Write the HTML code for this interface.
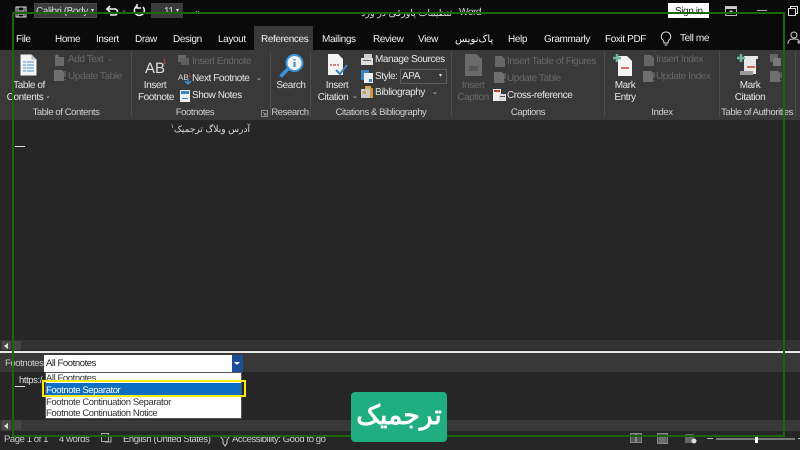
<!DOCTYPE html>
<html><head><meta charset="utf-8">
<style>
html,body{margin:0;padding:0;background:#262626}
#r{position:relative;width:800px;height:450px;overflow:hidden;background:#262626;font-family:"Liberation Sans","Noto Sans CJK SC",sans-serif;filter:blur(.35px);text-rendering:geometricPrecision}
#r div{position:absolute;white-space:nowrap}
.t{font-size:10px;color:#e6e6e6;line-height:12px;margin-top:2px;letter-spacing:-.42px}
.c{text-align:center;transform:translateX(-50%)}
.d{color:#696969}
.g{color:#cfcfcf}
.tab{top:32px;font-size:10px;color:#f0f0f0;line-height:12px;margin-top:2px;letter-spacing:-.38px}
[dir=rtl]{letter-spacing:0!important}
svg{position:absolute;overflow:visible}
.sep{width:1px;background:#4d4d4d;top:52px;height:64px}
</style></head><body>
<div id="r">
<div style="left:0;top:0;width:800px;height:50px;background:#0a0a0a"></div>
<div style="left:0;top:50px;width:800px;height:70px;background:#393939"></div>
<div style="left:254px;top:26px;width:59px;height:24px;background:#393939"></div>

<!-- title bar -->
<svg style="left:15px;top:6px" width="12" height="12"><path d="M1 1h10v10H1z M3 1v4h6V1 M3 11V8h6v3" fill="none" stroke="#ddd" stroke-width="1"/></svg>
<div style="left:34px;top:3px;width:63px;height:15px;background:#3b3b3b;border:1px solid #4a4a4a;box-sizing:border-box"></div>
<div class="t" style="left:36px;top:4px;color:#ddd">Calibri (Body</div>
<div class="t" style="left:91px;top:3px;font-size:6px;color:#ddd">▾</div>
<svg style="left:105px;top:5px" width="14" height="12"><path d="M2 4h7a3 3 0 0 1 1 6H5 M5 1L2 4l3 3" fill="none" stroke="#eee" stroke-width="1.6"/></svg>
<div class="t" style="left:121px;top:3px;font-size:7px;color:#888">⌄</div>
<svg style="left:133px;top:4px" width="13" height="13"><path d="M4 2a5 5 0 1 0 6 1 M4 0v4h4" fill="none" stroke="#eee" stroke-width="1.5"/></svg>
<div style="left:151px;top:3px;width:32px;height:15px;background:#3b3b3b"></div>
<div class="t" style="left:164px;top:4px;color:#ddd">11</div>
<div class="t" style="left:176px;top:3px;font-size:6px;color:#ddd">▾</div>
<div class="t" style="left:194px;top:3px;font-size:8px;color:#ccc">⌄</div>
<div class="t" style="left:352px;top:6px;width:100px;text-align:right;color:#ddd;font-size:9.5px" dir="rtl">تنظیمات پاورقی در ورد</div>
<div class="t" style="left:459px;top:5px;color:#ddd">Word</div>
<div style="left:668px;top:3px;width:41px;height:15px;background:#fff"></div>
<div class="t" style="left:675px;top:4px;color:#222">Sign in</div>
<svg style="left:725px;top:6px" width="12" height="10"><path d="M.5.5h11v9H.5z" fill="none" stroke="#bbb"/><path d="M1 1h10v2H1zM6 4l-2 2h4z" fill="#ccc"/></svg>
<div style="left:757px;top:10px;width:10px;height:1px;background:#aaa"></div>
<svg style="left:788px;top:6px" width="10" height="10"><path d="M.5 2.500h7v7h-7z M2.500 2.500v-2h7v7h-2" fill="none" stroke="#ddd"/></svg>

<!-- tabs -->
<div class="tab" style="left:16px">File</div>
<div class="tab" style="left:55px">Home</div>
<div class="tab" style="left:96px">Insert</div>
<div class="tab" style="left:135px">Draw</div>
<div class="tab" style="left:173px">Design</div>
<div class="tab" style="left:218px">Layout</div>
<div class="tab" style="left:261px">References</div>
<div class="tab" style="left:322px">Mailings</div>
<div class="tab" style="left:373px">Review</div>
<div class="tab" style="left:418px">View</div>
<div class="tab" style="left:455px" dir="rtl">پاک‌نویس</div>
<div class="tab" style="left:508px">Help</div>
<div class="tab" style="left:544px">Grammarly</div>
<div class="tab" style="left:605px">Foxit PDF</div>
<svg style="left:660px;top:31px" width="12" height="15"><path d="M6 1a4.500 4.500 0 0 0-3 8c.8.800 1 1.500 1 3h4c0-1.500.2-2.200 1-3a4.500 4.500 0 0 0-3-8z M4.500 14h3" fill="none" stroke="#ddd"/></svg>
<div class="tab" style="left:680px;top:31px">Tell me</div>
<svg style="left:787px;top:31px" width="13" height="14"><circle cx="7" cy="4" r="3" fill="none" stroke="#ccc"/><path d="M1 13c0-4 2-5 6-5s5 1 5 2M10 11h4M12 9v4" fill="none" stroke="#ccc"/></svg>

<!-- TOC group -->
<svg style="left:20px;top:54px" width="17" height="22"><path d="M.5.5h11l5 5v16H.5z" fill="#f4f4f4"/><path d="M11.500.5v5h5" fill="#bbb"/><path d="M3 8h3M7 8h7M3 11h3M7 11h7M3 14h3M7 14h7M3 17h3M7 17h7" stroke="#4a8fd0"/></svg>
<div class="t c" style="left:29px;top:78px">Table of</div>
<div class="t c" style="left:25px;top:90px">Contents</div>
<div class="t" style="left:45px;top:89px;font-size:7px;color:#ccc">⌄</div>
<svg style="left:54px;top:54px" width="11" height="12"><path d="M1 3h9v9H1z" fill="#6a6a6a"/><path d="M3 0v4M1 2h4" stroke="#7a7a7a"/></svg>
<div class="t d" style="left:68px;top:52px">Add Text</div>
<div class="t d" style="left:107px;top:52px;font-size:7px">⌄</div>
<svg style="left:54px;top:70px" width="12" height="12"><path d="M0 0h8l2 2v9H0z" fill="#6f6f6f"/><path d="M11 1v6M11 9v1" stroke="#777"/></svg>
<div class="t d" style="left:68px;top:69px">Update Table</div>
<div class="t c g" style="left:66px;top:105px;font-size:9.500px">Table of Contents</div>
<div class="sep" style="left:131px"></div>

<!-- Footnotes -->
<div class="t" style="left:145px;top:58px;font-size:15px;line-height:17px;color:#ddd;letter-spacing:0">AB</div>
<div class="t" style="left:162px;top:54px;font-size:8px;color:#c4452a">1</div>
<div class="t c" style="left:155px;top:78px">Insert</div>
<div class="t c" style="left:156px;top:90px">Footnote</div>
<svg style="left:178px;top:55px" width="12" height="11"><path d="M0 0h8v7H0z" fill="#666"/><path d="M3 3h8v7H3z" fill="#5e5e5e"/></svg>
<div class="t d" style="left:192px;top:54px">Insert Endnote</div>
<div class="t" style="left:178px;top:70px;font-size:8px;color:#ddd;letter-spacing:0">AB</div>
<div class="t" style="left:188px;top:68px;font-size:6px;color:#c4452a">1</div>
<svg style="left:184px;top:78px" width="8" height="7"><path d="M4 0v5M1 3l3 3 3-3" fill="none" stroke="#3a94dc" stroke-width="1.300"/></svg>
<div class="t" style="left:192px;top:71px">Next Footnote</div>
<div class="t" style="left:256px;top:71px;font-size:7px;color:#ccc">⌄</div>
<svg style="left:180px;top:90px" width="10" height="12"><path d="M0 0h10v12H0z" fill="#eee"/><path d="M1 1h8v3H1zM2 8h6v1H2z" fill="#3a84c8"/></svg>
<div class="t" style="left:192px;top:88px">Show Notes</div>
<div class="t c g" style="left:195px;top:105px;font-size:9.500px">Footnotes</div>
<svg style="left:261px;top:110px" width="7" height="7"><path d="M.5.5h6v6h-6zM2 2l3 3M3 5h2V3" fill="none" stroke="#aaa" stroke-width=".8"/></svg>
<div class="sep" style="left:270px"></div>

<!-- Research -->
<svg style="left:279px;top:54px" width="26" height="25"><circle cx="15.500" cy="9" r="8" fill="#f4f4f4" stroke="#3a94dc" stroke-width="2"/><path d="M9 15L1.500 22.500" stroke="#3a94dc" stroke-width="3.500"/><path d="M15.500 8v5M15.500 5v1.500" stroke="#3a84c8" stroke-width="2"/></svg>
<div class="t c" style="left:291px;top:78px">Search</div>
<div class="t c g" style="left:290px;top:105px;font-size:9.500px">Research</div>
<div class="sep" style="left:310px"></div>

<!-- Citations -->
<svg style="left:328px;top:54px" width="21" height="24"><path d="M0 0h10l5 5v16H0z" fill="#f4f4f4"/><path d="M4 11H2M11 11H9M5 11h3" stroke="#c4452a" stroke-width="1.300"/><path d="M8 16l4 4 7-9" fill="none" stroke="#3a84c8" stroke-width="2"/></svg>
<div class="t c" style="left:337px;top:78px">Insert</div>
<div class="t c" style="left:333px;top:90px">Citation</div>
<div class="t" style="left:352px;top:89px;font-size:7px;color:#ccc">⌄</div>
<svg style="left:361px;top:54px" width="13" height="12"><path d="M3 0h8v4H3z" fill="#ccc"/><path d="M0 4h12v7H0z" fill="#ddd"/><path d="M2 6h8v1H2z" fill="#666"/></svg>
<div class="t" style="left:375px;top:52px">Manage Sources</div>
<svg style="left:361px;top:70px" width="13" height="13"><path d="M0 0h8v10H0z" fill="#3a84c8"/><path d="M3 3h9v10H3z" fill="#eee"/><path d="M8 9h3v3H8z" fill="#3a84c8"/></svg>
<div class="t" style="left:375px;top:69px">Style:</div>
<div style="left:400px;top:69px;width:47px;height:15px;border:1px solid #5c5c5c;box-sizing:border-box;background:#393939"></div>
<div class="t" style="left:402px;top:69px">APA</div>
<div class="t" style="left:439px;top:68px;font-size:6px;color:#ddd">▾</div>
<svg style="left:361px;top:86px" width="13" height="13"><path d="M4 0h6v3H4z" fill="#d9a74a"/><path d="M0 3h9v9H0z" fill="#c9c9c9"/><path d="M9 2h3v10H9zM2 5h3v3H2z" fill="#d09a3c"/></svg>
<div class="t" style="left:375px;top:85px">Bibliography</div>
<div class="t" style="left:432px;top:85px;font-size:7px;color:#ccc">⌄</div>
<div class="t c g" style="left:381px;top:105px;font-size:9.500px">Citations &amp; Bibliography</div>
<div class="sep" style="left:451px"></div>

<!-- Captions -->
<svg style="left:465px;top:54px" width="17" height="22"><path d="M0 0h11l6 5v17H0z" fill="#6a6a6a"/><path d="M4 12h9v5H4z" fill="#555"/></svg>
<div class="t c d" style="left:473px;top:78px">Insert</div>
<div class="t c d" style="left:473px;top:90px">Caption</div>
<svg style="left:495px;top:56px" width="10" height="11"><path d="M0 0h7l3 3v8H0z" fill="#666"/></svg>
<div class="t d" style="left:507px;top:54px">Insert Table of Figures</div>
<svg style="left:494px;top:72px" width="12" height="12"><path d="M0 0h8l2 2v9H0z" fill="#6f6f6f"/><path d="M11 1v6M11 9v1" stroke="#777"/></svg>
<div class="t d" style="left:507px;top:71px">Update Table</div>
<svg style="left:493px;top:89px" width="13" height="12"><path d="M0 0h8v12H0z" fill="#eee"/><path d="M1 1h6v2H1z" fill="#c4452a"/><path d="M6 5h7v7H6z" fill="#ddd"/><path d="M7 7h5v1H7z" fill="#555"/></svg>
<div class="t" style="left:507px;top:88px">Cross-reference</div>
<div class="t c g" style="left:528px;top:105px;font-size:9.500px">Captions</div>
<div class="sep" style="left:604px"></div>

<!-- Index -->
<svg style="left:613px;top:54px" width="21" height="23"><path d="M5 2h9l5 5v15H5z" fill="#f4f4f4"/><path d="M8 14h8" stroke="#d0452a" stroke-width="1.500"/><path d="M4 0v8M0 4h8" stroke="#6fb59f" stroke-width="2.500"/></svg>
<div class="t c" style="left:625px;top:78px">Mark</div>
<div class="t c" style="left:625px;top:90px">Entry</div>
<svg style="left:644px;top:55px" width="10" height="11"><path d="M0 0h7l3 3v8H0z" fill="#666"/></svg>
<div class="t d" style="left:656px;top:52px">Insert Index</div>
<svg style="left:643px;top:71px" width="12" height="12"><path d="M0 0h8l2 2v9H0z" fill="#6f6f6f"/><path d="M11 1v6M11 9v1" stroke="#777"/></svg>
<div class="t d" style="left:656px;top:69px">Update Index</div>
<div class="t c g" style="left:662px;top:105px;font-size:9.500px">Index</div>
<div class="sep" style="left:719px"></div>

<!-- TOA -->
<svg style="left:737px;top:54px" width="24" height="23"><path d="M7 2h14v3h-2v15H3v-3h4z" fill="#e8e8e8"/><path d="M10 13h8" stroke="#d0452a" stroke-width="1.500"/><path d="M4 0v8M0 4h8" stroke="#6fb59f" stroke-width="2.500"/><path d="M3 17h13v4H3z" fill="#9a9a9a"/></svg>
<div class="t c" style="left:750px;top:78px">Mark</div>
<div class="t c" style="left:750px;top:90px">Citation</div>
<svg style="left:770px;top:54px" width="11" height="12"><path d="M0 0h8v8H0z" fill="#666"/><path d="M3 4h8v8H3z" fill="#777"/></svg>
<svg style="left:770px;top:71px" width="12" height="12"><path d="M0 0h8l2 2v9H0z" fill="#6f6f6f"/><path d="M11 1v6M11 9v1" stroke="#777"/></svg>
<div class="t c g" style="left:757px;top:105px;font-size:9.500px">Table of Authorities</div>
<div class="sep" style="left:795px"></div>

<!-- document -->
<div class="t" style="left:150px;top:121px;width:100px;text-align:right;font-size:9px;color:#ddd" dir="rtl">آدرس وبلاگ ترجمیک<sup style="font-size:6px;line-height:0">۱</sup></div>
<div style="left:15px;top:146px;width:10px;height:1px;background:#ddd"></div>

<!-- top scrollbar -->
<div style="left:0;top:340px;width:800px;height:10px;background:#333"></div>
<div style="left:2px;top:341px;width:9px;height:9px;background:#4a4a4a"></div>
<div style="left:4px;top:343px;width:0;height:0;border:3px solid transparent;border-right:4px solid #ddd;border-left:0"></div>
<div style="left:13px;top:341px;width:8px;height:9px;background:#454545"></div>
<div style="left:0;top:351px;width:800px;height:2px;background:#e8e8e8"></div>
<div style="left:0;top:353px;width:800px;height:19px;background:#383838"></div>

<!-- footnotes pane -->
<div class="t" style="left:5px;top:356px;font-size:9.500px;color:#ccc">Footnotes</div>
<div style="left:44px;top:355px;width:188px;height:17px;background:#fff"></div>
<div class="t" style="left:46px;top:356px;font-size:9.500px;color:#222">All Footnotes</div>
<div style="left:232px;top:355px;width:11px;height:17px;background:#1c4e96"></div>
<div style="left:234px;top:362px;width:0;height:0;border:3px solid transparent;border-top:3.500px solid #fff;border-bottom:0"></div>
<div class="t" style="left:19px;top:373px;font-size:9.500px;color:#ddd">https:/</div>
<div style="left:15px;top:386px;width:10px;height:1px;background:#ddd"></div>

<div style="left:45px;top:372px;width:197px;height:47px;background:#fff;border:1px solid #555;box-sizing:border-box"></div>
<div class="t" style="left:46px;top:371px;font-size:9.500px;color:#333">All Footnotes</div>
<div style="left:46px;top:383px;width:195px;height:12px;background:#0c6fc4"></div>
<div class="t" style="left:46px;top:383px;font-size:9.500px;color:#fff">Footnote Separator</div>
<div style="left:42px;top:380px;width:204px;height:17px;border:2px solid #f6ec10;box-sizing:border-box"></div>
<div class="t" style="left:46px;top:395px;font-size:9.500px;color:#333">Footnote Continuation Separator</div>
<div class="t" style="left:46px;top:406px;font-size:9.500px;color:#333">Footnote Continuation Notice</div>

<!-- bottom scrollbar -->
<div style="left:0;top:420px;width:800px;height:11px;background:#383838"></div>
<div style="left:2px;top:420px;width:9px;height:10px;background:#4a4a4a"></div>
<div style="left:4px;top:423px;width:0;height:0;border:3px solid transparent;border-right:4px solid #ddd;border-left:0"></div>
<div style="left:13px;top:420px;width:8px;height:10px;background:#454545"></div>

<!-- status bar -->
<div class="t" style="left:4px;top:432px;font-size:9.500px;color:#ccc">Page 1 of 1</div>
<div class="t" style="left:59px;top:432px;font-size:9.500px;color:#ccc">4 words</div>
<svg style="left:101px;top:433px" width="11" height="10"><path d="M.5.5h7v8h-7zM8 3h2v6H4" fill="none" stroke="#aaa"/></svg>
<div class="t" style="left:123px;top:432px;font-size:9.500px;color:#ccc">English (United States)</div>
<svg style="left:219px;top:434px" width="12" height="12"><path d="M1 2l5 1 5-1-3 4v3l-2 3-2-3V6z" fill="none" stroke="#ccc"/></svg>
<div class="t" style="left:232px;top:432px;font-size:9.500px;color:#ccc">Accessibility: Good to go</div>
<svg style="left:630px;top:433px" width="12" height="10"><path d="M.5.5h5v9h-5zM6.500.5h5v9h-5z" fill="#555" stroke="#888"/></svg>
<svg style="left:657px;top:433px" width="11" height="11"><path d="M.5.5h10v10H.5zM2 3h7M2 5h7M2 7h7M2 9h7" fill="#555" stroke="#888"/></svg>
<svg style="left:685px;top:434px" width="12" height="10"><path d="M0 0h9v9H0z" fill="#666"/><circle cx="9" cy="7" r="2.500" fill="#ddd"/></svg>
<div style="left:707px;top:438px;width:6px;height:1px;background:#bbb"></div>
<div style="left:716px;top:438px;width:79px;height:2px;background:#777"></div>
<div style="left:755px;top:435px;width:3px;height:8px;background:#fff"></div>
<div style="left:798px;top:438px;width:2px;height:1px;background:#bbb"></div>

<!-- green frame -->
<div style="left:12px;top:12px;width:773px;height:425px;border:2px solid #1b6606;box-sizing:border-box"></div>

<!-- logo -->
<div style="left:351px;top:392px;width:96px;height:50px;background:#1eae7f;border-radius:4px"></div>
<div style="left:351px;top:392px;width:96px;height:50px;line-height:46px;text-align:center;font-size:26.500px;font-weight:bold;color:#fff;font-family:'Liberation Sans','Noto Sans CJK SC',sans-serif" dir="rtl">ترجمیک</div>
</div>
</body></html>
